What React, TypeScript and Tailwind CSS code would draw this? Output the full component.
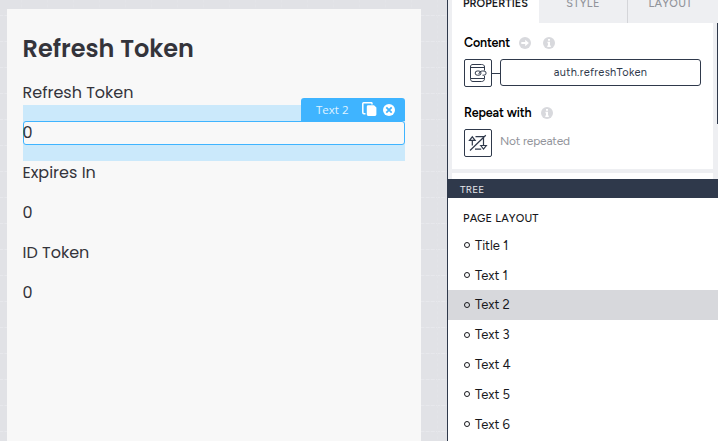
import React from "react";

const poppins = "font-['Poppins','Inter',sans-serif]";
const proxima = "font-['Proxima_Nova','Figtree','Lato',sans-serif]";

function GridBackdrop() {
  return (
    <svg className="absolute inset-0 -z-10" width="718" height="441">
      <defs>
        <pattern id="grid" x="-6" y="-11" width="26" height="26" patternUnits="userSpaceOnUse">
          <path d="M0 .5H26" stroke="#e7e8ec" strokeWidth="1" strokeDasharray="4 1.200" />
          <path d="M1.500 0V26" stroke="#e3e4e8" strokeWidth="1" strokeDasharray="3 2.200" />
        </pattern>
      </defs>
      <rect width="718" height="441" fill="#e1e2e6" />
      <rect width="718" height="441" fill="url(#grid)" />
    </svg>
  );
}

function CopyIcon() {
  return (
    <svg width="15" height="15" viewBox="0 0 15 15">
      <path d="M10 2.5V1.5a.8.8 0 0 0-.8-.8H2A1.2 1.2 0 0 0 .8 2v8.600c0 .7.5 1.2 1.2 1.2h1.500" fill="none" stroke="#fff" strokeWidth="1.5" />
      <path d="M6.2 3.2H12L14.4 5.6v7a1.4 1.4 0 0 1-1.4 1.4H6.2a1.4 1.4 0 0 1-1.4-1.4v-8a1.4 1.4 0 0 1 1.4-1.4Z" fill="#fff" />
    </svg>
  );
}

function CloseIcon() {
  return (
    <svg width="12" height="12" viewBox="0 0 12 12">
      <circle cx="6" cy="6" r="6" fill="#fff" />
      <path d="M3.3 3.3l5.4 5.4M8.7 3.3L3.3 8.7" stroke="#3fb4ff" strokeWidth="1.8" />
    </svg>
  );
}

function ArrowIcon() {
  return (
    <svg width="12" height="12" viewBox="0 0 12 12">
      <circle cx="6" cy="6" r="6" fill="#d8d9dd" />
      <path d="M2.3 6h5" stroke="#fff" strokeWidth="2" />
      <path d="M6.2 2.800L9.900 6 6.2 9.200Z" fill="#fff" />
    </svg>
  );
}

function InfoIcon() {
  return (
    <svg width="12" height="12" viewBox="0 0 12 12">
      <circle cx="6" cy="6" r="6" fill="#d8d9dd" />
      <path d="M5 2h2v1.800H5zM4.500 4.800H7v3.700h.8V10H4.300V8.500H5V6.200h-.5z" fill="#fff" />
    </svg>
  );
}

function DataIcon() {
  return (
    <svg width="18" height="20" viewBox="0 0 18 20" fill="none" stroke="#2f394b" strokeWidth="1">
      <path d="M15.500 7.500V4C15.500 2.200 14.300 1.500 12.500 1.500H4C2.200 1.500 1.500 2.200 1.500 4V15.500C1.500 17.500 2.200 18.500 4 18.500H12.500C14.300 18.500 15.500 17.500 15.500 15.500V13M1.500 4.500H15.500M1.500 15.500H15.500" />
      <rect x="6.200" y="8" width="5.800" height="4.200" rx="2.100" />
      <path d="M9.800 11.100C10.300 9.300 11.500 8 13.300 8H15A2.100 2.100 0 0 1 15 12.200H13.500" />
    </svg>
  );
}

function RepeatOffIcon() {
  return (
    <svg width="20" height="18" viewBox="0 0 20 18" fill="none" stroke="#2f394b" strokeWidth="1.200">
      <path d="M1.500 6.300L4.300 2.800L7.100 6.300ZM4.300 6.300V11.500M7.500 2.700H15.500V11.500M12.700 11.500L15.500 15L18.300 11.500ZM7 15.200H13.200M2 16.500L17.800 1.200" />
    </svg>
  );
}

const items = [
  { name: "Title 1" },
  { name: "Text 1" },
  { name: "Text 2", selected: true },
  { name: "Text 3" },
  { name: "Text 4" },
  { name: "Text 5" },
  { name: "Text 6" },
];

export default function App() {
  return (
    <div className="relative isolate flex h-[441px] w-[718px] overflow-hidden">
      <GridBackdrop />
      <main className={`ml-[7px] mt-[9px] flex h-[432px] w-[414px] shrink-0 flex-col bg-[#f8f8f8] px-4 text-base leading-6 text-[#34343b] ${poppins}`}>
        <h1 className="-ml-[0.5px] mt-[22px] h-9 whitespace-nowrap text-[24px] font-semibold leading-9">Refresh Token</h1>
        <p className="-ml-[0.5px] mt-[14px] h-6">Refresh Token</p>
        <div className="relative bg-[#cbe9fb] py-4">
          <div className="h-6 rounded-[3px] border border-[#3fb4ff] bg-[#f8f8f8] leading-[22px]">
            <span className="-ml-[1.5px]">0</span>
          </div>
          <div className="absolute -top-[7px] right-0 flex h-[23px] w-[104px] items-center rounded-t-[3px] bg-[#3fb4ff] pl-[15px] font-['Open_Sans',sans-serif] text-[11.5px] text-[#e0f3ff]">
            <span className="w-[46px] whitespace-nowrap">Text 2</span>
            <CopyIcon />
            <span className="ml-[6px]"><CloseIcon /></span>
          </div>
        </div>
        <p className="-ml-[0.5px] h-6">Expires In</p>
        <p className="-ml-[0.5px] mt-4 h-6">0</p>
        <p className="-ml-[0.5px] mt-4 h-6">ID Token</p>
        <p className="-ml-[0.5px] mt-4 h-6">0</p>
      </main>

      <aside className={`ml-auto flex w-[271px] flex-col border-l border-[#2f394b] bg-[#eeeff2] ${proxima}`}>
        <nav className="ml-1 flex h-[23px] shrink-0 text-[11px] leading-[14px]">
          <div className="flex w-[87px] justify-center bg-white font-semibold tracking-[0.05px] text-[#17181c]"><span className="-mt-[3px]">PROPERTIES</span></div>
          <div className="flex w-[89px] justify-center border-r border-[#d4d5d9] font-medium tracking-[0.3px] text-[#92949b]"><span className="-mt-[3px]">STYLE</span></div>
          <div className="flex flex-1 justify-center pr-[5px] font-medium tracking-[0.3px] text-[#92949b]"><span className="-mt-[3px]">LAYOUT</span></div>
        </nav>
        <div className="flex h-[156px] shrink-0">
          <div className="ml-1 flex w-[261px] flex-col">
            <section className="h-[146px] bg-white pl-3 pt-3">
              <div className="flex h-4 items-center">
                <h2 className="w-[55px] text-[12.5px] font-semibold leading-4 tracking-[-0.15px] text-black">Content</h2>
                <ArrowIcon />
                <span className="ml-3"><InfoIcon /></span>
              </div>
              <div className="mt-2 flex h-7 items-center">
                <button className="flex h-7 w-7 items-center justify-center rounded-[2px] border border-[#2f394b]"><DataIcon /></button>
                <span className="h-px w-2 bg-[#2f394b]" />
                <div className="mb-px flex h-[27px] w-[201px] items-center justify-center rounded-[3px] border border-[#2f394b] pt-[2px] text-[11px] tracking-[0.3px] text-[#2f394b]">auth.refreshToken</div>
              </div>
              <div className="mt-[18px] flex h-4 items-center">
                <h2 className="w-[77px] whitespace-nowrap text-[12.5px] font-semibold leading-4 tracking-[-0.15px] text-black">Repeat with</h2>
                <InfoIcon />
              </div>
              <div className="mt-2 flex h-7">
                <button className="flex h-7 w-7 items-center justify-center rounded-[2px] border border-[#2f394b]"><RepeatOffIcon /></button>
                <span className="ml-2 text-[12px] leading-6 tracking-[-0.2px] text-[#92949b]">Not repeated</span>
              </div>
            </section>
            <div className="mt-1 h-[6px] bg-white" />
          </div>
          <div className="ml-auto h-[101px] w-px bg-[#2f394b]" />
        </div>
        <header className="-ml-px flex h-[19px] shrink-0 items-center bg-[#2f394b] pl-[13px] pt-px text-[10px] tracking-[0.2px] text-[#e6e7ea]">TREE</header>
        <section className="flex-1 bg-white text-[#17181c]">
          <h3 className="h-8 pl-[15px] pt-[14px] text-[11px] font-medium leading-[14px] tracking-[0.2px]">PAGE LAYOUT</h3>
          <ul>
            {items.map((item) => (
              <li key={item.name} className={`flex h-[29.9px] items-center pl-4 text-[13px] ${item.selected ? "bg-[#d7d8dc]" : ""}`}>
                <span className="mr-[5px] size-[6px] rounded-full border-[1.3px] border-[#17181c]" />
                <span className="pt-px tracking-[-0.05px]">{item.name}</span>
              </li>
            ))}
          </ul>
        </section>
      </aside>
    </div>
  );
}
